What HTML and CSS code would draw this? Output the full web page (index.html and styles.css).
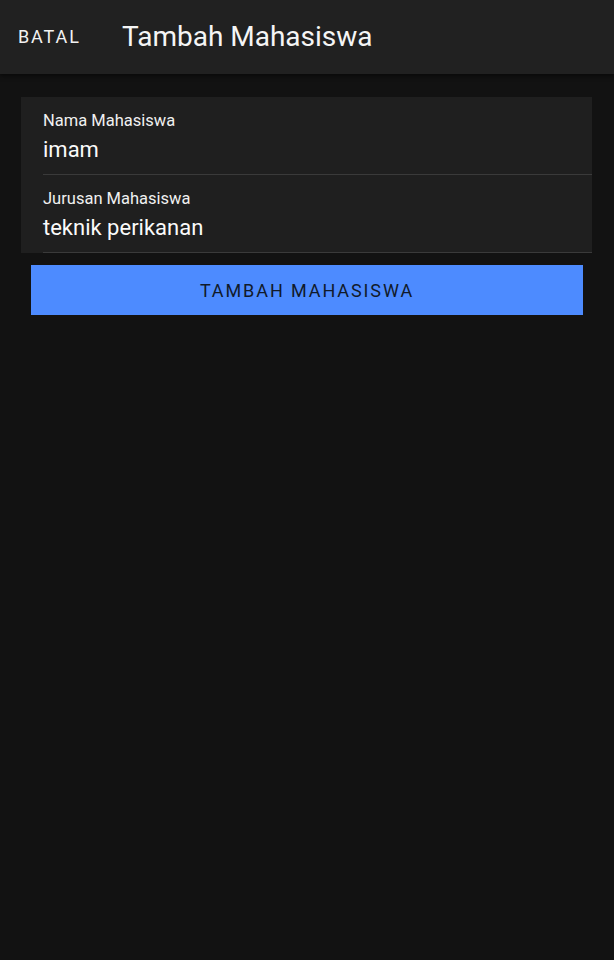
FILE: index.html
```html
<!DOCTYPE html>
<html>
<head>
<meta charset="utf-8">
<link rel="stylesheet" href="styles.css">
</head>
<body>
<header class="appbar">
  <span class="cancel">BATAL</span>
  <span class="title">Tambah Mahasiswa</span>
</header>
<main class="content">
  <section class="card">
    <div class="field">
      <div class="label">Nama Mahasiswa</div>
      <div class="value">imam</div>
    </div>
    <div class="field">
      <div class="label">Jurusan Mahasiswa</div>
      <div class="value">teknik perikanan</div>
    </div>
  </section>
  <button class="submit">TAMBAH MAHASISWA</button>
</main>
</body>
</html>
```
FILE: styles.css
```css
html, body {
  margin: 0;
  padding: 0;
  background: #121212;
  height: 100%;
  font-family: Roboto, "Liberation Sans", sans-serif;
  color: #fff;
}
.appbar {
  height: 74px;
  background: #212121;
  display: flex;
  align-items: center;
  padding-left: 18px;
  box-shadow: 0 2px 4px rgba(0,0,0,0.5);
  box-sizing: border-box;
}
.cancel {
  font-size: 18px;
  letter-spacing: 1.9px;
  font-weight: 400;
  color: #f2f2f2;
  width: 104px;
  position: relative;
  top: -1px;
}
.title {
  font-size: 28px;
  color: #f5f5f5;
  position: relative;
  top: -1px;
}
.content {
  padding: 23px 22px 0 21px;
}
.card {
  background: #1f1f1f;
  padding-left: 22px;
}
.field {
  height: 77px;
  border-bottom: 1px solid #3a3a3a;
}
.label {
  font-size: 16.5px;
  color: #f0f0f0;
  padding-top: 14px;
  line-height: 19px;
}
.value {
  font-size: 22px;
  color: #fafafa;
  line-height: 26px;
  padding-top: 7px;
}
.submit {
  display: block;
  margin: 12px 0 0 10px;
  width: 552px;
  height: 50px;
  background: #4d8bff;
  border: none;
  color: #111a2a;
  font-family: Roboto, "Liberation Sans", sans-serif;
  font-size: 18px;
  letter-spacing: 1.9px;
  font-weight: 400;
}
```
